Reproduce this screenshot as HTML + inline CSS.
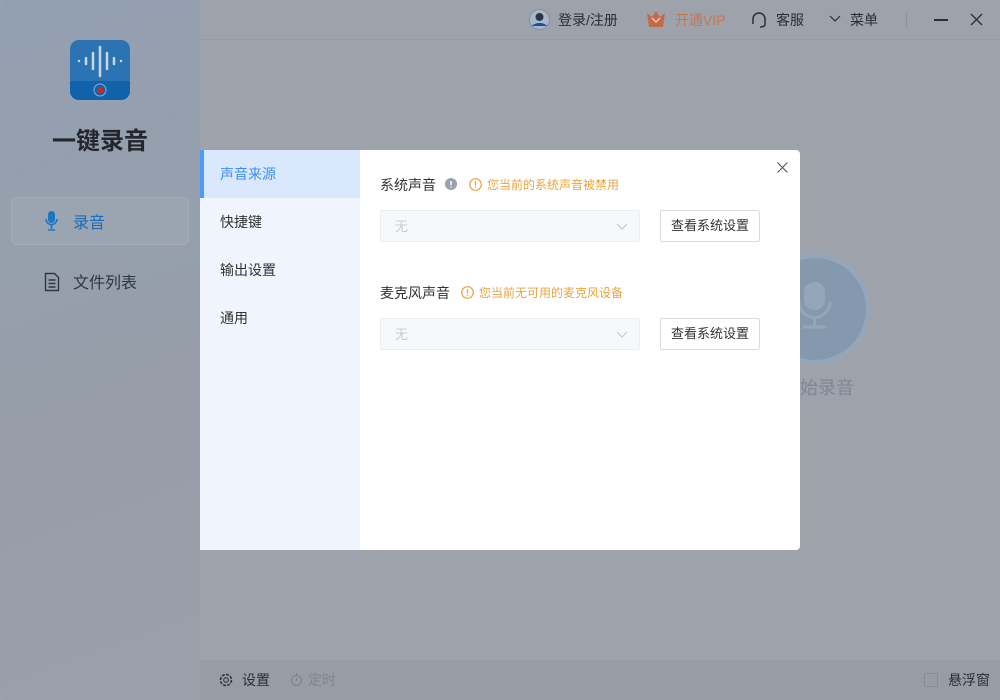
<!DOCTYPE html>
<html><head><meta charset="utf-8"><style>
*{margin:0;padding:0;box-sizing:border-box}
body{width:1000px;height:700px;overflow:hidden;font-family:"Liberation Sans","Noto Sans CJK SC",sans-serif;background:#9ea2aa;position:relative}
.abs{position:absolute}
.side{left:0;top:0;width:200px;height:700px;background:linear-gradient(160deg,#93a0b2 0%,#979ea9 60%,#9aa0a9 100%);border-radius:6px 0 0 6px}
.top{left:200px;top:0;width:800px;height:40px;border-bottom:1px solid #959aa3}
.t{font-size:14px;color:#2a2e36}
.dlg{left:200px;top:150px;width:600px;height:400px;background:#fff;border-radius:0 4px 4px 0}
.menu{left:0;top:0;width:160px;height:400px;background:#f0f4fc}
.mi{position:absolute;left:20px;font-size:14px;color:#333}
.sel{left:180px;width:260px;height:32px;border:1px solid #eceef2;background:#f7f8fa;border-radius:2px}
.btn{left:460px;width:100px;height:32px;border:1px solid #d8dbe0;border-radius:2px;font-size:13px;color:#333;text-align:center;line-height:30px}
.warn{font-size:12px;color:#eba33e}
</style></head><body>
<div class="abs side"></div>
<div class="abs" style="left:70px;top:40px;width:60px;height:60px;border-radius:9px;background:#2b73b2;overflow:hidden">
 <div class="abs" style="left:0;top:41px;width:60px;height:19px;background:#1063aa"></div>
 <svg class="abs" style="left:0;top:0" width="60" height="60"><g stroke="#c9d6e2" stroke-linecap="round" stroke-width="2.5"><line x1="9" y1="21" x2="9" y2="21"/><line x1="16" y1="18" x2="16" y2="24"/><line x1="23" y1="13" x2="23" y2="29"/><line x1="30" y1="7" x2="30" y2="36"/><line x1="37" y1="13" x2="37" y2="29"/><line x1="44" y1="18" x2="44" y2="24"/><line x1="51" y1="21" x2="51" y2="21"/></g><circle cx="30" cy="50" r="6" fill="none" stroke="#8fb0d3" stroke-width="1"/><rect x="27" y="47" width="6" height="6" fill="#b5302f"/></svg>
</div>
<div class="abs" style="left:0;top:121px;width:200px;text-align:center;font-size:24px;font-weight:bold;color:#23262d">一键录音</div>
<div class="abs" style="left:11px;top:197px;width:178px;height:48px;border:1px solid #a3abb8;border-radius:6px;background:#9ba4b1"></div>
<svg class="abs" style="left:44px;top:210px" width="16" height="22"><rect x="4" y="1" width="7" height="12" rx="3.5" fill="#1a78c2"/><path d="M2 9a5.5 5.5 0 0 0 11 0M7.5 15v4M4 20h7" stroke="#1a78c2" stroke-width="1.6" fill="none"/></svg>
<div class="abs" style="left:73px;top:209px;font-size:16px;color:#1a6db8">录音</div>
<svg class="abs" style="left:44px;top:272px" width="16" height="20"><path d="M1.5 1.5h9l4 4v13h-13z M4.5 8h7M4.5 11.5h7M4.5 15h7" stroke="#2f3744" stroke-width="1.4" fill="none"/></svg>
<div class="abs" style="left:73px;top:269px;font-size:16px;color:#2f3744">文件列表</div>

<div class="abs top"></div>
<svg class="abs" style="left:529px;top:9px" width="21" height="21"><circle cx="10.5" cy="10.5" r="10" fill="#a9b8c8" stroke="#7d8fa6"/><circle cx="10.5" cy="8" r="4" fill="#29354a"/><path d="M3 17c3-4 12-4 15 0" fill="#1a4fa3"/></svg>
<div class="abs t" style="left:558px;top:10px">登录/注册</div>
<svg class="abs" style="left:646px;top:10px" width="20" height="18"><path d="M1 3l5 4 4-6 4 6 5-4-2 14H3z" fill="#c36a4a"/><path d="M6 8l4 4 4-4" stroke="#f0c5b0" stroke-width="1.5" fill="none"/></svg>
<div class="abs t" style="left:675px;top:10px;color:#c17858">开通VIP</div>
<svg class="abs" style="left:751px;top:11px" width="16" height="17"><path d="M2 10V8a6 6 0 0 1 12 0v2M2 9v4M14 9v4M14 13q0 3-5 3" stroke="#2a2e36" stroke-width="1.5" fill="none"/></svg>
<div class="abs t" style="left:776px;top:10px">客服</div>
<svg class="abs" style="left:829px;top:15px" width="12" height="8"><path d="M1 1l5 5 5-5" stroke="#2a2e36" stroke-width="1.2" fill="none"/></svg>
<div class="abs t" style="left:850px;top:10px">菜单</div>
<div class="abs" style="left:906px;top:12px;width:1px;height:16px;background:#8e939b"></div>
<div class="abs" style="left:934px;top:19px;width:14px;height:1.5px;background:#2a2e36"></div>
<svg class="abs" style="left:970px;top:13px" width="13" height="13"><path d="M1 1l11 11M12 1L1 12" stroke="#2a2e36" stroke-width="1.3"/></svg>

<div class="abs" style="left:759px;top:253px;width:112px;height:112px;border-radius:50%;border:5px solid #95a6b8;background:#8599ae"></div>
<svg class="abs" style="left:797px;top:280px" width="36" height="60"><rect x="7" y="2" width="21" height="28" rx="10" fill="#95a6b8"/><path d="M2 22a15 15 0 0 0 31 0M17.5 38v8M6 47h23" stroke="#95a6b8" stroke-width="3" fill="none"/></svg>
<div class="abs" style="left:782px;top:374px;font-size:18px;color:#7f8796">开始录音</div>

<div class="abs" style="left:200px;top:660px;width:800px;height:40px;background:#989ca4"></div>
<svg class="abs" style="left:219px;top:673px" width="14" height="14"><circle cx="7" cy="7" r="2.3" stroke="#2a2e36" fill="none"/><circle cx="7" cy="7" r="5.5" stroke="#2a2e36" stroke-dasharray="3 1.3" stroke-width="1.5" fill="none"/></svg>
<div class="abs t" style="left:242px;top:670px">设置</div>
<svg class="abs" style="left:290px;top:672px" width="13" height="15"><circle cx="6.5" cy="8.5" r="5" stroke="#7d828c" fill="none"/><path d="M6.5 1v2M6.5 6v3" stroke="#7d828c"/></svg>
<div class="abs t" style="left:308px;top:670px;color:#80858e">定时</div>
<div class="abs" style="left:924px;top:673px;width:14px;height:14px;border:1px solid #868b94;border-radius:2px"></div>
<div class="abs t" style="left:948px;top:670px">悬浮窗</div>

<div class="abs dlg">
 <div class="abs menu"></div>
 <div class="abs" style="left:0;top:0;width:160px;height:48px;background:#d9e8fc;border-left:4px solid #4c9bf4"></div>
 <div class="mi" style="top:14px;color:#3d8ff0">声音来源</div>
 <div class="mi" style="top:62px">快捷键</div>
 <div class="mi" style="top:110px">输出设置</div>
 <div class="mi" style="top:158px">通用</div>
 <svg class="abs" style="left:577px;top:12px" width="11" height="11"><path d="M.5.5l10 10M10.5.5l-10 10" stroke="#555" stroke-width="1.1"/></svg>
 <div class="abs" style="left:180px;top:25px;font-size:14px;color:#333">系统声音</div>
 <svg class="abs" style="left:245px;top:28px" width="12" height="12"><circle cx="6" cy="6" r="6" fill="#9aa0ad"/><path d="M6 3v4M6 8.5v1" stroke="#fff" stroke-width="1.5"/></svg>
 <svg class="abs" style="left:269px;top:28px" width="13" height="13"><circle cx="6.5" cy="6.5" r="5.8" stroke="#eba33e" stroke-width="1.2" fill="none"/><path d="M6.5 3.2v4.3M6.5 8.7v1.2" stroke="#eba33e" stroke-width="1.3"/></svg>
 <div class="abs warn" style="left:287px;top:26px">您当前的系统声音被禁用</div>
 <div class="abs sel" style="top:60px"></div>
 <div class="abs" style="left:195px;top:66px;font-size:13px;color:#c8cbd0">无</div>
 <svg class="abs" style="left:416px;top:73px" width="12" height="7"><path d="M1 1l5 5 5-5" stroke="#c0c4cc" fill="none"/></svg>
 <div class="abs btn" style="top:60px">查看系统设置</div>
 <div class="abs" style="left:180px;top:133px;font-size:14px;color:#333">麦克风声音</div>
 <svg class="abs" style="left:261px;top:136px" width="13" height="13"><circle cx="6.5" cy="6.5" r="5.8" stroke="#eba33e" stroke-width="1.2" fill="none"/><path d="M6.5 3.2v4.3M6.5 8.7v1.2" stroke="#eba33e" stroke-width="1.3"/></svg>
 <div class="abs warn" style="left:279px;top:134px">您当前无可用的麦克风设备</div>
 <div class="abs sel" style="top:168px"></div>
 <div class="abs" style="left:195px;top:174px;font-size:13px;color:#c8cbd0">无</div>
 <svg class="abs" style="left:416px;top:181px" width="12" height="7"><path d="M1 1l5 5 5-5" stroke="#c0c4cc" fill="none"/></svg>
 <div class="abs btn" style="top:168px">查看系统设置</div>
</div>
</body></html>
